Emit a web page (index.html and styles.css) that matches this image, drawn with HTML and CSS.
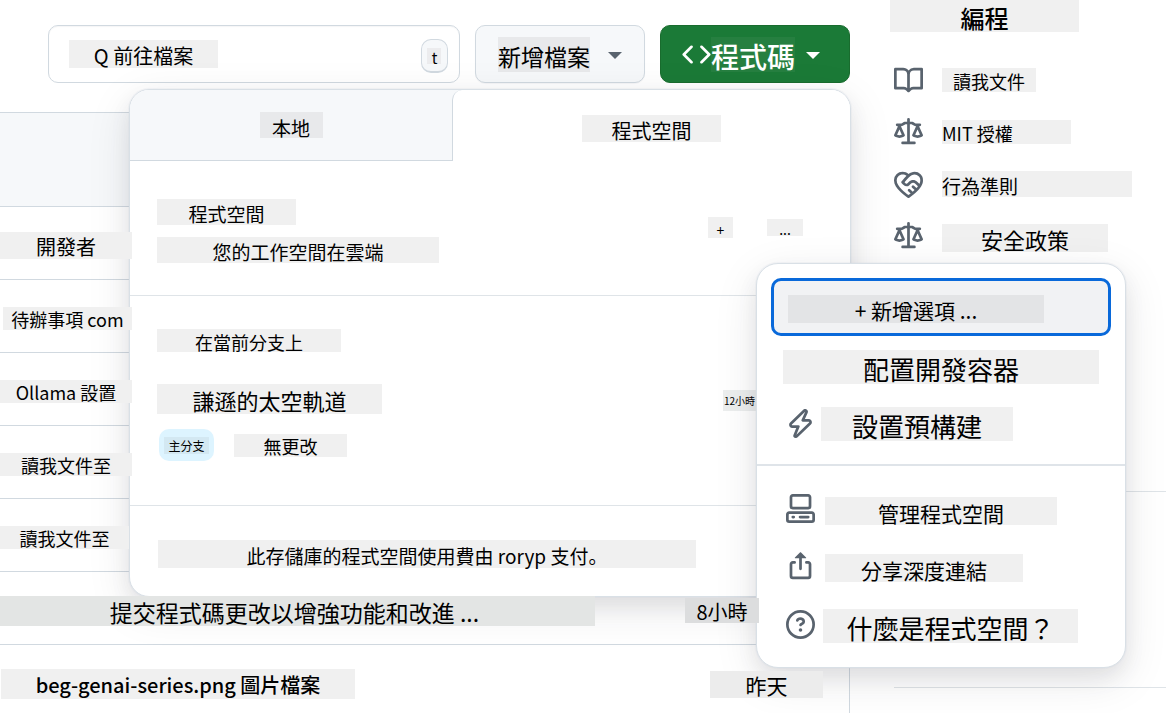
FILE: index.html
```html
<!DOCTYPE html>
<html lang="zh-Hant">
<head>
<meta charset="utf-8">
<meta name="viewport" content="width=device-width, initial-scale=1">
<title>程式空間</title>
<link rel="stylesheet" href="styles.css">
</head>
<body>
<svg class="sprite" aria-hidden="true">
  <symbol id="i-book" viewBox="0 0 16 16"><path d="M0 1.75A.75.75 0 0 1 .75 1h4.253c1.227 0 2.317.59 3 1.501A3.743 3.743 0 0 1 11.006 1h4.245a.75.75 0 0 1 .75.75v10.5a.75.75 0 0 1-.75.75h-4.507a2.25 2.25 0 0 0-1.591.659l-.622.621a.75.75 0 0 1-1.06 0l-.622-.621A2.25 2.25 0 0 0 5.258 13H.75a.75.75 0 0 1-.75-.75Zm7.251 10.324.004-5.073-.002-2.253A2.25 2.25 0 0 0 5.003 2.5H1.5v9h3.757a3.75 3.75 0 0 1 1.994.574ZM8.755 4.75l-.004 7.322a3.752 3.752 0 0 1 1.992-.572H14.5v-9h-3.495a2.25 2.25 0 0 0-2.25 2.25Z"/></symbol>
  <symbol id="i-law" viewBox="0 0 16 16"><path d="M8.75.75V2h.985c.304 0 .603.08.867.231l1.29.736c.038.022.08.033.124.033h2.234a.75.75 0 0 1 0 1.5h-.427l2.111 4.692a.75.75 0 0 1-.154.838l-.53-.53.529.531-.001.002-.002.002-.006.006-.006.005-.01.01-.045.04c-.21.176-.441.327-.686.45C14.556 10.78 13.88 11 13 11a4.498 4.498 0 0 1-2.023-.454 3.544 3.544 0 0 1-.686-.45l-.045-.04-.016-.015-.006-.006-.004-.004v-.001a.75.75 0 0 1-.154-.838L12.178 4.5h-.162c-.305 0-.604-.079-.868-.231l-1.29-.736a.245.245 0 0 0-.124-.033H8.75V13h2.5a.75.75 0 0 1 0 1.5h-6.5a.75.75 0 0 1 0-1.5h2.5V3.5h-.984a.245.245 0 0 0-.124.033l-1.289.737c-.265.15-.564.23-.869.23h-.162l2.112 4.692a.75.75 0 0 1-.154.838l-.53-.53.529.531-.001.002-.002.002-.006.006-.016.015-.045.04c-.21.176-.441.327-.686.45C4.556 10.78 3.88 11 3 11a4.498 4.498 0 0 1-2.023-.454 3.544 3.544 0 0 1-.686-.45l-.045-.04-.016-.015-.006-.006-.004-.004v-.001a.75.75 0 0 1-.154-.838L2.178 4.5H1.75a.75.75 0 0 1 0-1.5h2.234a.249.249 0 0 0 .125-.033l1.288-.737c.265-.15.564-.23.869-.23h.984V.75a.75.75 0 0 1 1.5 0Zm2.945 8.477c.285.135.718.273 1.305.273s1.02-.138 1.305-.273L13 6.327Zm-10 0c.285.135.718.273 1.305.273s1.02-.138 1.305-.273L3 6.327Z"/></symbol>
  <symbol id="i-conduct" viewBox="0 0 16 16"><path d="M8.048 2.241c.964-.709 2.079-1.238 3.325-1.241a4.616 4.616 0 0 1 3.282 1.355c.41.408.757.86.996 1.428.238.568.348 1.206.347 1.968 0 2.193-1.505 4.254-3.081 5.862-1.496 1.526-3.213 2.796-4.249 3.563l-.22.163a.749.749 0 0 1-.895 0l-.221-.163c-1.036-.767-2.753-2.037-4.249-3.563C1.51 10.008.007 7.952.002 5.762a4.614 4.614 0 0 1 1.353-3.407C3.123.585 6.223.537 8.048 2.24Zm-1.153.983c-1.25-1.033-3.321-.967-4.48.191a3.115 3.115 0 0 0-.913 2.335c0 1.556 1.109 3.24 2.652 4.813C5.463 11.898 6.96 13.032 8 13.805c.353-.262.758-.565 1.191-.905l-1.326-1.223a.75.75 0 0 1 1.018-1.102l1.48 1.366c.328-.281.659-.577.984-.887L9.99 9.802a.75.75 0 1 1 1.019-1.103l1.384 1.28c.295-.329.566-.661.81-.995L12.92 8.7l-1.167-1.168c-.674-.671-1.78-.664-2.474.03-.268.269-.538.537-.802.797-.893.882-2.319.843-3.185-.032-.346-.35-.693-.697-1.043-1.047a.75.75 0 0 1-.04-1.016c.162-.191.336-.401.52-.623.62-.748 1.356-1.637 2.166-2.417Zm7.112 4.442c.313-.65.491-1.293.491-1.916v-.001c0-.614-.088-1.045-.23-1.385-.143-.339-.357-.633-.673-.949a3.111 3.111 0 0 0-2.218-.915c-1.092.003-2.165.627-3.226 1.602-.823.755-1.554 1.637-2.228 2.45l-.127.154.562.566a.755.755 0 0 0 1.066.02l.794-.79c1.258-1.258 3.312-1.31 4.594-.032.396.394.792.791 1.173 1.173Z"/></symbol>
  <symbol id="i-zap" viewBox="0 0 16 16"><path d="M9.504.43a1.516 1.516 0 0 1 2.437 1.713L10.415 5.5h2.123c1.57 0 2.346 1.909 1.22 3.004l-7.34 7.142a1.249 1.249 0 0 1-.871.354h-.302a1.25 1.25 0 0 1-1.157-1.723L5.633 10.5H3.462c-1.57 0-2.346-1.909-1.22-3.004L9.503.429Zm1.047 1.074L3.286 8.571A.25.25 0 0 0 3.462 9H6.75a.75.75 0 0 1 .694 1.034l-1.713 4.188 6.982-6.793A.25.25 0 0 0 12.538 7H9.25a.75.75 0 0 1-.683-1.06l2.008-4.418.003-.006a.036.036 0 0 0-.004-.009l-.006-.006-.008-.001c-.003 0-.006.002-.009.004Z"/></symbol>
  <symbol id="i-codespaces" viewBox="0 0 16 16"><path d="M0 11.25c0-.966.784-1.75 1.75-1.75h12.5c.966 0 1.75.784 1.75 1.75v3A1.75 1.75 0 0 1 14.25 16H1.75A1.75 1.75 0 0 1 0 14.25Zm2-9.5C2 .784 2.784 0 3.75 0h8.5C13.216 0 14 .784 14 1.75v5a1.75 1.75 0 0 1-1.75 1.75h-8.5A1.75 1.75 0 0 1 2 6.75Zm1.75-.25a.25.25 0 0 0-.25.25v5c0 .138.112.25.25.25h8.5a.25.25 0 0 0 .25-.25v-5a.25.25 0 0 0-.25-.25Zm-2 9.5a.25.25 0 0 0-.25.25v3c0 .138.112.25.25.25h12.5a.25.25 0 0 0 .25-.25v-3a.25.25 0 0 0-.25-.25Z"/><path d="M7 12.75a.75.75 0 0 1 .75-.75h4.5a.75.75 0 0 1 0 1.5h-4.5a.75.75 0 0 1-.75-.75Zm-4 0a.75.75 0 0 1 .75-.75h.5a.75.75 0 0 1 0 1.5h-.5a.75.75 0 0 1-.75-.75Z"/></symbol>
  <symbol id="i-share" viewBox="0 0 16 16"><path d="M3.75 6.5a.25.25 0 0 0-.25.25v6.5c0 .138.112.25.25.25h8.5a.25.25 0 0 0 .25-.25v-6.5a.25.25 0 0 0-.25-.25h-1a.75.75 0 0 1 0-1.5h1c.966 0 1.75.784 1.75 1.75v6.5A1.75 1.75 0 0 1 12.25 15h-8.5A1.75 1.75 0 0 1 2 13.25v-6.5C2 5.784 2.784 5 3.75 5h1a.75.75 0 0 1 0 1.5ZM7.823.177a.25.25 0 0 1 .354 0l2.896 2.896a.25.25 0 0 1-.177.427H8.75v5.75a.75.75 0 0 1-1.5 0V3.5H5.104a.25.25 0 0 1-.177-.427Z"/></symbol>
  <symbol id="i-question" viewBox="0 0 16 16"><path d="M0 8a8 8 0 1 1 16 0A8 8 0 0 1 0 8Zm8-6.5a6.5 6.5 0 1 0 0 13 6.5 6.5 0 0 0 0-13ZM6.92 6.085h.001a.749.749 0 1 1-1.342-.67c.169-.339.436-.701.849-.977C6.845 4.16 7.369 4 8 4a2.756 2.756 0 0 1 1.637.525c.503.377.863.965.863 1.725 0 .448-.115.83-.329 1.15-.205.307-.47.513-.692.662-.109.072-.22.138-.313.195l-.006.004a6.24 6.24 0 0 0-.26.16.952.952 0 0 0-.276.245.75.75 0 0 1-1.248-.832c.184-.264.42-.489.692-.661.103-.067.207-.132.313-.195l.007-.004c.1-.061.182-.11.258-.161a.969.969 0 0 0 .277-.245C8.96 6.514 9 6.427 9 6.25a.612.612 0 0 0-.262-.525A1.27 1.27 0 0 0 8 5.5c-.369 0-.595.09-.74.187a1.01 1.01 0 0 0-.34.398ZM9 11a1 1 0 1 1-2 0 1 1 0 0 1 2 0Z"/></symbol>
  <symbol id="i-code" viewBox="0 0 16 16"><path d="m11.28 3.22 4.25 4.25a.75.75 0 0 1 0 1.06l-4.25 4.25a.749.749 0 0 1-1.275-.326.749.749 0 0 1 .215-.734L13.94 8l-3.72-3.72a.749.749 0 0 1 .326-1.275.749.749 0 0 1 .734.215Zm-6.56 0a.751.751 0 0 1 1.042.018.751.751 0 0 1 .018 1.042L2.06 8l3.72 3.72a.749.749 0 0 1-.326 1.275.749.749 0 0 1-.734-.215L.47 8.53a.75.75 0 0 1 0-1.06Z"/></symbol>
</svg>

<div class="page">
  <main class="main">
    <div class="toolbar">
      <div class="search">
        <input class="search-input" type="text" placeholder="Q 前往檔案" aria-label="前往檔案">
        <kbd class="key"><span class="key-label">t</span></kbd>
      </div>
      <button class="btn btn-file" type="button"><span class="btn-label">新增檔案</span><span class="caret"></span></button>
      <button class="btn btn-code" type="button" aria-expanded="true"><svg class="icon"><use href="#i-code"/></svg><span class="btn-label">程式碼</span><span class="caret"></span></button>

      <section class="popover">
        <div class="tabs" role="tablist">
          <button class="tab tab-local" type="button" role="tab" aria-selected="false"><span class="label label-local">本地</span></button>
          <button class="tab tab-spaces" type="button" role="tab" aria-selected="true"><span class="label label-spaces">程式空間</span></button>
        </div>
        <header class="intro">
          <div class="intro-text">
            <h2 class="label intro-title">程式空間</h2>
            <p class="label intro-sub">您的工作空間在雲端</p>
          </div>
          <div class="actions">
            <button class="label action-add" type="button">+</button>
            <button class="label action-more" type="button" aria-expanded="true">...</button>
          </div>
        </header>
        <div class="branch">
          <h3 class="label branch-title">在當前分支上</h3>
          <div class="space-row">
            <a class="label space-name" href="#">謙遜的太空軌道</a>
            <span class="label space-time">12小時</span>
          </div>
          <div class="space-meta">
            <span class="pill"><span class="pill-label">主分支</span></span>
            <span class="label changes">無更改</span>
          </div>
        </div>
        <footer class="billing"><p class="label billing-text">此存儲庫的程式空間使用費由 roryp 支付。</p></footer>

        <div class="menu" role="menu">
          <div class="menu-group">
            <button class="item item-new" type="button" role="menuitem"><span class="label">+ 新增選項 ...</span></button>
            <button class="item item-config" type="button" role="menuitem"><span class="label">配置開發容器</span></button>
            <button class="item item-prebuild" type="button" role="menuitem"><svg class="icon"><use href="#i-zap"/></svg><span class="label">設置預構建</span></button>
          </div>
          <div class="menu-group">
            <button class="item item-manage" type="button" role="menuitem"><svg class="icon"><use href="#i-codespaces"/></svg><span class="label">管理程式空間</span></button>
            <button class="item item-share" type="button" role="menuitem"><svg class="icon"><use href="#i-share"/></svg><span class="label">分享深度連結</span></button>
            <button class="item item-what" type="button" role="menuitem"><svg class="icon"><use href="#i-question"/></svg><span class="label">什麼是程式空間？</span></button>
          </div>
        </div>
      </section>
    </div>

    <table class="files">
      <thead><tr><th colspan="2"></th></tr></thead>
      <tbody>
        <tr><td><a class="label row-label row-dev" href="#">開發者</a></td><td></td></tr>
        <tr><td><a class="label row-label row-todo" href="#">待辦事項 com</a></td><td></td></tr>
        <tr><td><a class="label row-label" href="#">Ollama 設置</a></td><td></td></tr>
        <tr><td><a class="label row-label" href="#">讀我文件至</a></td><td></td></tr>
        <tr><td><a class="label row-label row-link" href="#">讀我文件至</a></td><td></td></tr>
        <tr><td><a class="label row-label row-commit" href="#">提交程式碼更改以增強功能和改進 ...</a></td><td class="date"><span class="label row-label date-hours">8小時</span></td></tr>
        <tr><td><a class="label row-label row-image" href="#">beg-genai-series.png 圖片檔案</a></td><td class="date"><span class="label row-label date-day">昨天</span></td></tr>
      </tbody>
    </table>
  </main>

  <aside class="side">
    <h2 class="label side-title">編程</h2>
    <ul class="links">
      <li><svg class="icon"><use href="#i-book"/></svg><a class="label link-readme" href="#">讀我文件</a></li>
      <li><svg class="icon"><use href="#i-law"/></svg><a class="label link-license" href="#">MIT 授權</a></li>
      <li><svg class="icon"><use href="#i-conduct"/></svg><a class="label link-conduct" href="#">行為準則</a></li>
      <li><svg class="icon"><use href="#i-law"/></svg><a class="label link-security" href="#">安全政策</a></li>
    </ul>
    <hr class="rule rule-first">
    <hr class="rule">
  </aside>
</div>
</body>
</html>
```
FILE: styles.css
```css
* { box-sizing: border-box; }

:root {
  --line: #d1d9e0;
  --tint: #f6f8fa;
  --patch: #f0f0f0;
  --icon: #59636e;
}

body {
  margin: 0;
  min-height: 100vh;
  overflow: hidden;
  background: #fff;
  color: #000;
  font-family: "Noto Sans CJK JP", "Noto Sans CJK TC", sans-serif;
  font-feature-settings: "locl" 0;
  font-size: 20px;
}

h2, h3, p, ul { margin: 0; padding: 0; font-size: inherit; font-weight: inherit; }
button, input, kbd { font: inherit; font-feature-settings: inherit; color: inherit; }
button { border: 0; padding: 0; background: none; cursor: pointer; }
a { color: inherit; text-decoration: none; }
.sprite { display: none; }

.icon { flex: none; width: 29px; height: 29px; fill: var(--icon); }

/* Text on a pale patch */
.label {
  display: flex;
  justify-content: center;
  align-items: center;
  height: 27px;
  padding-top: 2px;
  background: var(--patch);
  line-height: 1;
  white-space: nowrap;
}

.page { display: flex; height: 100vh; }
.main { flex: 1; min-width: 0; }

/* Toolbar */
.toolbar { position: relative; display: flex; gap: 15px; margin-top: 25px; padding-left: 48px; }
.search {
  display: flex;
  flex: 1;
  align-items: center;
  justify-content: space-between;
  height: 58px;
  padding: 0 11px 0 20px;
  border: 1px solid var(--line);
  border-radius: 10px;
  box-shadow: inset 0 1px 1px #1f23280a;
}
.search-input {
  width: 149px;
  height: 28px;
  padding: 2px 0 0;
  border: 0;
  outline: 0;
  background: var(--patch);
  text-align: center;
}
.search-input::placeholder { color: #000; opacity: 1; }
.key {
  display: flex;
  align-items: center;
  justify-content: center;
  width: 27px;
  height: 34px;
  margin-top: 4px;
  border: 1px solid var(--line);
  border-bottom-width: 2px;
  border-radius: 10px;
  background: var(--tint);
}
.key-label { width: 14px; height: 16px; background: #ececee; font-size: 15px; line-height: 20px; text-align: center; }

.btn { display: flex; align-items: center; height: 58px; border: 1px solid var(--line); border-radius: 10px; }
.btn-label { display: flex; align-items: center; height: 35px; padding-top: 4px; line-height: 1; }
.btn-file { gap: 18px; padding: 0 22px; background: var(--tint); box-shadow: 0 1px 1px #1f23280a; font-size: 23px; }
.btn-file .btn-label { background: #e8e9eb; }
.btn-code { padding: 0 29px 0 21px; border-color: #196c2e; background: #1b7a37; color: #fff; font-size: 28px; font-weight: 500; }
.btn-code .btn-label { margin-right: 11px; background: #267f40; }
.btn-code .icon { fill: #fff; }
.caret { margin-top: 2px; border: 7px solid transparent; border-top-color: var(--icon); border-bottom: 0; }
.btn-code .caret { border-top-color: #fff; }

/* Code popover */
.popover {
  position: absolute;
  z-index: 2;
  top: calc(100% + 6px);
  right: -1px;
  width: 722px;
  border: 1px solid #d9e0e6;
  border-radius: 20px;
  background: #fff;
  box-shadow: 0 0 0 1px #d1d9e033, 0 10px 20px #25292e14, 0 12px 44px #25292e1a;
}
.tabs { display: flex; height: 71px; border-radius: 19px 19px 0 0; background: var(--tint); }
.tab { display: flex; align-items: center; justify-content: center; }
.tab-local { flex: 0 0 322px; border-bottom: 1px solid var(--line); }
.tab-spaces { flex: 1; padding-top: 6px; border-left: 1px solid var(--line); border-radius: 10px 19px 0 0; background: #fff; }
.label-local { width: 63px; height: 26px; padding-top: 4px; background: #e8e9eb; font-size: 19px; }
.label-spaces { width: 139px; padding-top: 4px; }

.intro {
  display: flex;
  align-items: center;
  justify-content: space-between;
  padding: 38px 47px 32px 27px;
  border-bottom: 1px solid #dfe4e8;
  font-size: 19px;
}
.intro-text { display: grid; gap: 12px; }
.intro-title { width: 139px; height: 26px; }
.intro-sub { width: 282px; height: 26px; }
.actions { display: flex; align-items: center; gap: 34px; padding-bottom: 7px; font-size: 14px; }
.action-add { width: 25px; height: 21px; padding-top: 4px; }
.action-more { width: 36px; height: 17px; }

.branch { padding: 33px 47px 44px 27px; border-bottom: 1px solid #dfe4e8; }
.branch-title { width: 184px; height: 23px; font-size: 18px; }
.space-row { display: flex; align-items: center; justify-content: space-between; margin-top: 32px; }
.space-name { width: 225px; height: 30px; font-size: 22px; }
.space-time { width: 33px; height: 21px; margin: 2px 47px 0 0; background: #eceeee; font-size: 10px; }
.space-meta { display: flex; align-items: center; gap: 20px; margin-top: 15px; padding-left: 2px; }
.pill { display: flex; align-items: center; justify-content: center; width: 55px; height: 32px; border-radius: 10px; background: #ddf4ff; }
.pill-label { padding: 2px 4px; background: #d3e8f2; font-size: 12px; line-height: 13px; }
.changes { width: 113px; height: 23px; font-size: 18px; }
.billing { padding: 34px 27px 28px 28px; }
.billing-text { width: 538px; height: 28px; font-size: 19px; }

/* Options menu */
.menu {
  position: absolute;
  z-index: 3;
  top: 173px;
  left: 626px;
  width: 370px;
  border: 1px solid #d9e0e6;
  border-radius: 22px;
  background: #fff;
  box-shadow: 0 0 0 1px #d1d9e033, 0 10px 20px #25292e14, 0 12px 44px #25292e1a;
}
.menu-group { padding: 14px 14px 12px; }
.menu-group + .menu-group { padding: 13px 14px 14px; border-top: 2px solid #dfe4e9; }
.item { display: flex; align-items: center; gap: 8px; width: 100%; height: 58px; padding-left: 15px; border-radius: 10px; font-size: 26px; }
.item .label { height: 34px; margin-top: 4px; padding-top: 4px; }
.item-new { padding-left: 14px; border: 3px solid #0969da; background: #f1f2f4; font-size: 21px; }
.item-new .label { width: 256px; height: 28px; padding-top: 2px; background: #e3e4e6; }
.item-config { padding-left: 12px; }
.item-config .label { width: 316px; }
.item-prebuild { gap: 6px; }
.item-prebuild .label { width: 192px; margin-top: 2px; }
.item-manage, .item-share { gap: 10px; font-size: 21px; }
.item-manage .label { width: 232px; height: 28px; margin-top: 6px; }
.item-share .label { width: 198px; height: 28px; }
.item-what .label { width: 255px; }

/* File list */
.files { width: 100%; margin-top: 29px; border: 1px solid var(--line); border-left: 0; border-spacing: 0; }
.files th { height: 94px; padding: 0; border-bottom: 1px solid var(--line); background: var(--tint); }
.files td { height: 73px; padding: 4px 0 0; border-bottom: 1px solid var(--line); }
.files .date { padding-right: 26px; }
.row-label { position: relative; z-index: 5; width: 132px; height: 23px; font-size: 18px; }
.row-dev { height: 27px; padding-top: 4px; font-size: 20px; }
.row-todo { width: 129px; margin-left: 3px; }
.row-link { width: 129px; }
.row-commit { width: 595px; height: 30px; margin-top: 2px; padding-right: 6px; background: #e3e5e4; font-size: 23px; }
.row-image { width: 354px; height: 30px; margin: 2px 0 0 1px; font-size: 20px; font-weight: 500; }
.date-hours { width: 74px; height: 25px; margin-left: auto; margin-right: 64px; padding-top: 4px; background: #dcddde; font-size: 20px; }
.date-day { width: 113px; height: 27px; margin-top: 2px; margin-left: auto; background: #ececec; font-size: 21px; }

/* Sidebar */
.side { flex: 0 0 316px; padding-left: 40px; }
.side-title { width: 189px; height: 32px; padding-top: 4px; font-size: 24px; font-weight: 500; }
.links { margin-top: 22px; padding-left: 4px; list-style: none; }
.links li { display: flex; align-items: center; gap: 19px; height: 52px; }
.link-readme { width: 94px; height: 24px; font-size: 18px; }
.link-license { justify-content: flex-start; width: 129px; height: 24px; font-size: 18px; }
.link-conduct { justify-content: flex-start; width: 190px; height: 26px; font-size: 19px; }
.link-security { width: 166px; height: 28px; margin-top: 4px; font-size: 22px; }
.rule { margin: 195px 0 0 4px; border: 0; border-top: 1px solid #dfe4e8; }
.rule-first { margin-top: 229px; }
```
